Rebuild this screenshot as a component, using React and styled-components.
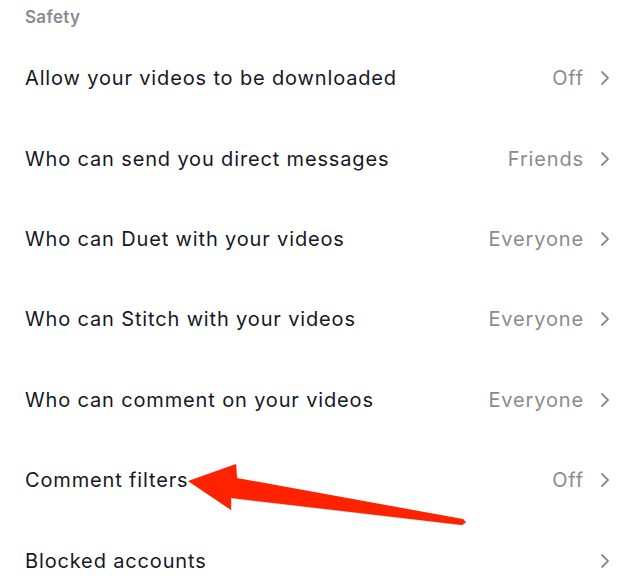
import React from "react";
import styled, { createGlobalStyle } from "styled-components";

const Global = createGlobalStyle`
  html, body { margin: 0; padding: 0; background: #fff; }
  body { font-family: Inter, "Open Sans", sans-serif; -webkit-font-smoothing: antialiased; }
`;

const Page = styled.div`
  position: relative;
  width: 640px;
  height: 580px;
  overflow: hidden;
  background: #fff;
`;

const SectionTitle = styled.div`
  height: 38px;
  display: flex;
  align-items: center;
  padding: 0 25px;
  box-sizing: border-box;
  padding-bottom: 4px;
  font-size: 17px;
  font-weight: 600;
  letter-spacing: 0.3px;
  color: #8a8b91;
`;

const List = styled.div`
  display: flex;
  flex-direction: column;
`;

const Row = styled.div`
  height: 80.4px;
  display: flex;
  align-items: center;
  padding: 0 30px 0 25px;
  box-sizing: border-box;
`;

const Label = styled.span`
  flex: 1;
  font-size: 20px;
  letter-spacing: 0.85px;
  color: #161823;
`;

const Value = styled.span`
  font-size: 20px;
  letter-spacing: 0.85px;
  color: #8a8b91;
  margin-right: 16px;
`;

const Chevron = styled.svg`
  width: 10px;
  height: 16px;
  flex: none;
`;

const Arrow = styled.svg`
  position: absolute;
  left: 0;
  top: 0;
  pointer-events: none;
`;

const rows = [
  ["Allow your videos to be downloaded", "Off"],
  ["Who can send you direct messages", "Friends"],
  ["Who can Duet with your videos", "Everyone"],
  ["Who can Stitch with your videos", "Everyone"],
  ["Who can comment on your videos", "Everyone"],
  ["Comment filters", "Off"],
  ["Blocked accounts", ""],
];

export default function App() {
  return (
    <Page>
      <Global />
      <SectionTitle>Safety</SectionTitle>
      <List>
        {rows.map(([label, value]) => (
          <Row key={label}>
            <Label>{label}</Label>
            {value && <Value>{value}</Value>}
            <Chevron viewBox="0 0 10 16">
              <path d="M2 2 L8 8 L2 14" fill="none" stroke="#8a8b91" strokeWidth="1.8" strokeLinecap="round" strokeLinejoin="round" />
            </Chevron>
          </Row>
        ))}
      </List>
      <Arrow width="640" height="580" viewBox="0 0 640 580">
        <polygon
          points="188,481 236,464 237,478 463,519 466,522 462,525 231,498 231,510"
          fill="#8fc7c7"
          opacity="0.5"
          transform="translate(1,1)"
        />
        <polygon
          points="188,481 236,464 237,478 463,519 466,522 462,525 231,498 231,510"
          fill="#ff2200"
        />
      </Arrow>
    </Page>
  );
}
